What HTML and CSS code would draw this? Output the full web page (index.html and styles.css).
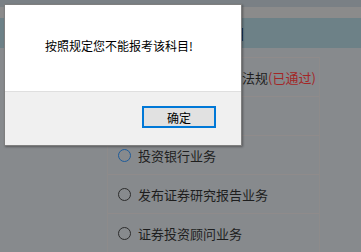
FILE: index.html
```html
<!DOCTYPE html>
<html lang="zh-CN">
<head>
    <meta charset="UTF-8">
    <meta name="viewport" content="width=device-width, initial-scale=1.0">
    <title>报考科目</title>
    <link rel="stylesheet" href="styles.css">
</head>
<body>
    <div class="topbar"></div>
    <div class="strip"></div>
    <div class="band"><span class="band-title">选择报考科目</span></div>

    <div class="subject-list">
        <div class="subject-row"><span class="radio"></span>证券市场基本法律法规<span class="passed">(已通过)</span></div>
        <div class="subject-row"><span class="radio"></span>金融市场基础知识</div>
        <div class="subject-row"><span class="radio radio-focus"></span>投资银行业务</div>
        <div class="subject-row"><span class="radio"></span>发布证券研究报告业务</div>
        <div class="subject-row"><span class="radio"></span>证券投资顾问业务</div>
    </div>

    <!-- alert box -->
    <div class="dialog">
        <div class="dialog-body">按照规定您不能报考该科目!</div>
        <div class="dialog-footer">
            <button class="dialog-btn">确定</button>
        </div>
    </div>
</body>
</html>
```

FILE: styles.css
```css
* {
    box-sizing: border-box;
    margin: 0;
    padding: 0;
}

body {
    font-family: "Noto Sans CJK SC", "Noto Sans", sans-serif;
    background-color: #878a8d;
    width: 361px;
    height: 252px;
    overflow: hidden;
}

.topbar {
    height: 7px;
    background: #7a8085;
}

.strip {
    height: 11px;
    background: #8b8b8b;
}

.band {
    height: 30px;
    background: #6d8187;
    padding-left: 161px;
    display: flex;
    align-items: center;
}

.band-title {
    font-size: 14px;
    color: #0f1c2a;
}

.subject-list {
    margin: 9px 0 0 107px;
    width: 213px;
    border-left: 1px solid #8d8b8b;
    border-right: 1px solid #8d8b8b;
}

.subject-row {
    height: 39px;
    border-top: 1px solid #8f8b8b;
    display: flex;
    align-items: center;
    padding-left: 10px;
    font-size: 13px;
    color: #1e1e1e;
}

.radio {
    width: 13px;
    height: 13px;
    border: 1px solid #2c2c2c;
    border-radius: 50%;
    margin-right: 7px;
    flex-shrink: 0;
}

.radio-focus {
    border-color: #1f5c9a;
}

.passed {
    color: #a42626;
}

.dialog {
    position: absolute;
    top: 4px;
    left: 4px;
    width: 238px;
    height: 142px;
    border: 1px solid #7f7f7f;
    background: #fff;
    box-shadow: 1px 1px 2px rgba(0,0,0,0.35);
    display: flex;
    flex-direction: column;
}

.dialog-body {
    height: 86px;
    padding: 32px 0 0 40px;
    font-size: 12px;
    color: #000;
}

.dialog-footer {
    flex: 1;
    background: #f0f0f0;
    border-top: 1px solid #dfdfdf;
    padding: 14px 25px 0 0;
    display: flex;
    justify-content: flex-end;
    align-items: flex-start;
}

.dialog-btn {
    width: 74px;
    height: 22px;
    border: 2px solid #0078d7;
    background: #e1e1e1;
    font-family: "Noto Sans CJK SC", sans-serif;
    font-size: 12px;
    color: #000;
}
```
